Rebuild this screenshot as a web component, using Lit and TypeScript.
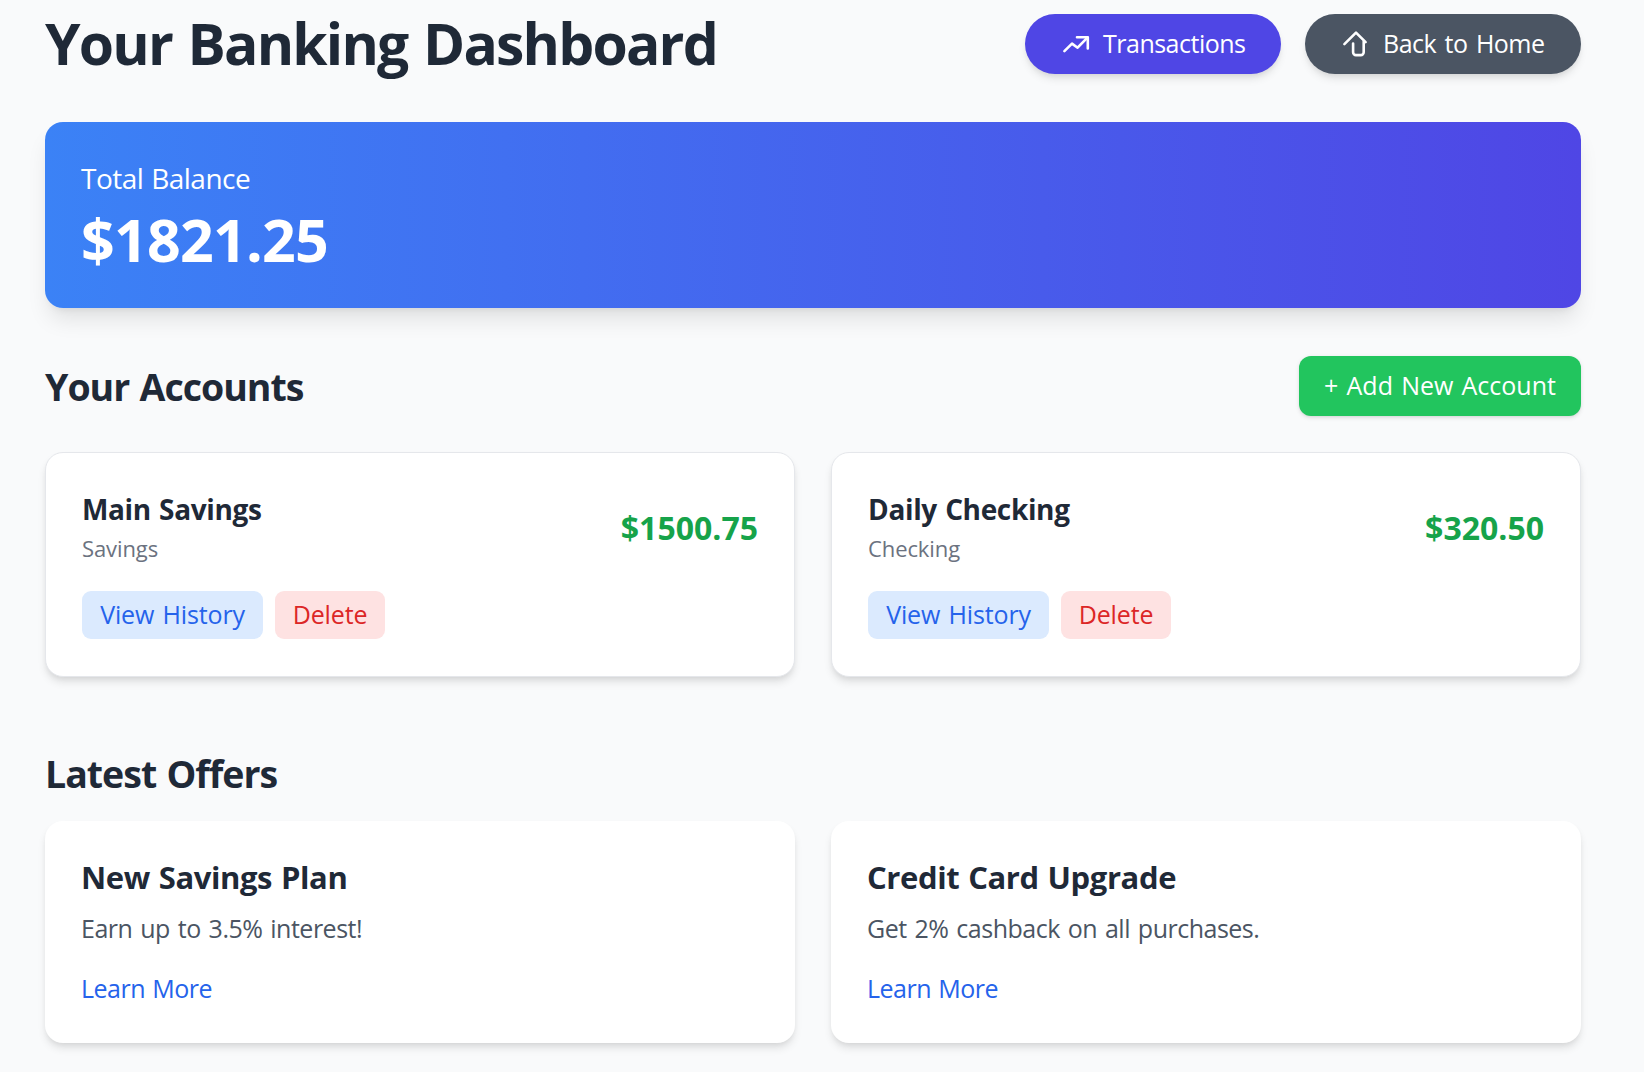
import { LitElement, html, css, svg } from "lit";
import { customElement, property } from "lit/decorators.js";

interface Account {
  name: string;
  kind: string;
  balance: string;
}

interface Offer {
  title: string;
  text: string;
}

const accounts: Account[] = [
  { name: "Main Savings", kind: "Savings", balance: "$1500.75" },
  { name: "Daily Checking", kind: "Checking", balance: "$320.50" },
];

const offers: Offer[] = [
  { title: "New Savings Plan", text: "Earn up to 3.5% interest!" },
  { title: "Credit Card Upgrade", text: "Get 2% cashback on all purchases." },
];

const trendIcon = svg`<path d="M3.4 22.2L11 14.6L16.6 18.7L26.4 8.6"/><path d="M16 8.2H26.8V19.4"/>`;
const homeIcon = svg`<path d="M3.4 15.2L15 3.6L24.6 13.2"/><path d="M12.1 14.6V23.2a2.9 2.9 0 0 0 2.9 2.9h4.8a2.9 2.9 0 0 0 2.9-2.9V12.6"/>`;

@customElement("account-card")
export class AccountCard extends LitElement {
  @property({ attribute: false }) account!: Account;

  static styles = css`
    :host {
      display: block;
      box-sizing: border-box;
      height: 225px;
      padding: 36px;
      background: #fff;
      border: 1px solid #e5e7eb;
      border-radius: 18px;
      box-shadow: 0 6px 9px -1.5px rgba(0, 0, 0, 0.1), 0 3px 6px -3px rgba(0, 0, 0, 0.1);
    }
    .top {
      display: flex;
      align-items: center;
      justify-content: space-between;
      height: 78px;
    }
    .name {
      font-size: 28px;
      line-height: 40px;
      font-weight: 700;
      letter-spacing: -0.35px;
      word-spacing: 1.3px;
      color: #1f2937;
    }
    .kind {
      font-size: 22px;
      line-height: 38px;
      letter-spacing: -0.1px;
      color: #6b7280;
    }
    .balance {
      padding-bottom: 1px;
      font-size: 32px;
      line-height: 48px;
      font-weight: 700;
      letter-spacing: 0;
      color: #16a34a;
    }
    .actions {
      display: flex;
      gap: 12px;
      margin-top: 24px;
    }
    .btn {
      height: 48px;
      padding: 0 0 1px;
      border: 0;
      border-radius: 9px;
      font: inherit;
      font-size: 25px;
      line-height: 47px;
      letter-spacing: -0.15px;
      word-spacing: 2px;
      text-align: center;
    }
    .history {
      width: 181px;
      background: #dbeafe;
      color: #2563eb;
    }
    .delete {
      width: 110px;
      background: #fee2e2;
      color: #dc2626;
    }
  `;

  render() {
    return html`
      <div class="top">
        <div>
          <div class="name">${this.account.name}</div>
          <div class="kind">${this.account.kind}</div>
        </div>
        <div class="balance">${this.account.balance}</div>
      </div>
      <div class="actions">
        <button class="btn history">View History</button>
        <button class="btn delete">Delete</button>
      </div>
    `;
  }
}

@customElement("offer-card")
export class OfferCard extends LitElement {
  @property({ attribute: false }) offer!: Offer;

  static styles = css`
    :host {
      display: block;
      box-sizing: border-box;
      height: 222px;
      padding: 33px 36px;
      background: #fff;
      border-radius: 18px;
      box-shadow: 0 6px 9px -1.5px rgba(0, 0, 0, 0.1), 0 3px 6px -3px rgba(0, 0, 0, 0.1);
    }
    .title {
      font-size: 31px;
      line-height: 46px;
      font-weight: 700;
      letter-spacing: -0.4px;
      word-spacing: 1.2px;
      color: #1f2937;
    }
    .text {
      margin-top: 10px;
      font-size: 25px;
      line-height: 36px;
      letter-spacing: -0.5px;
      word-spacing: 1.9px;
      color: #4b5563;
    }
    .link {
      display: block;
      margin-top: 24px;
      font-size: 25px;
      line-height: 36px;
      letter-spacing: -0.5px;
      word-spacing: 1.2px;
      color: #2563eb;
    }
  `;

  render() {
    return html`
      <div class="title">${this.offer.title}</div>
      <div class="text">${this.offer.text}</div>
      <a class="link">Learn More</a>
    `;
  }
}

@customElement("app-root")
export class AppRoot extends LitElement {
  static styles = css`
    :host {
      display: block;
      box-sizing: border-box;
      height: 1072px;
      padding: 14px 63px 0 45px;
      overflow: hidden;
      background: #f9fafb;
      font-family: "Open Sans", "Noto Sans", sans-serif;
      color: #1f2937;
    }
    .row {
      display: flex;
      align-items: center;
      justify-content: space-between;
      height: 60px;
    }
    .title {
      margin: 0;
      padding-bottom: 2px;
      font-size: 57px;
      line-height: 60px;
      font-weight: 700;
      letter-spacing: -1.8px;
      word-spacing: 2.5px;
      white-space: nowrap;
    }
    .nav {
      display: flex;
      gap: 24px;
    }
    .pill {
      box-sizing: border-box;
      display: flex;
      align-items: center;
      gap: 12px;
      height: 60px;
      padding: 0 0 0 36px;
      border: 0;
      border-radius: 30px;
      font: inherit;
      font-size: 25px;
      letter-spacing: -0.5px;
      word-spacing: 2.4px;
      white-space: nowrap;
      color: #fff;
      box-shadow: 0 6px 9px -1.5px rgba(0, 0, 0, 0.1), 0 3px 6px -3px rgba(0, 0, 0, 0.1);
    }
    .pill-label {
      padding-bottom: 2px;
    }
    .transactions {
      width: 256px;
      background: #4f46e5;
    }
    .home {
      width: 276px;
      background: #4b5563;
    }
    .icon {
      width: 30px;
      height: 30px;
      fill: none;
      stroke: currentColor;
      stroke-width: 2.6;
      stroke-linecap: round;
      stroke-linejoin: round;
    }
    .balance {
      box-sizing: border-box;
      height: 186px;
      margin: 48px 0;
      padding: 36px;
      border-radius: 18px;
      background: linear-gradient(to right, #3b82f6, #4f46e5);
      color: #fff;
      box-shadow: 0 15px 22.5px -4.5px rgba(0, 0, 0, 0.1), 0 6px 9px -6px rgba(0, 0, 0, 0.1);
    }
    .label {
      font-size: 28px;
      line-height: 40px;
      letter-spacing: -0.5px;
      word-spacing: 1px;
    }
    .total {
      font-size: 59px;
      line-height: 83px;
      font-weight: 700;
      letter-spacing: -0.75px;
    }
    .heading {
      margin: 0;
      padding-top: 1px;
      font-size: 37.5px;
      line-height: 54px;
      font-weight: 700;
      letter-spacing: -1px;
      word-spacing: 1.5px;
    }
    .add {
      width: 282px;
      height: 60px;
      padding: 0 0 2px;
      border: 0;
      border-radius: 12px;
      background: #22c55e;
      color: #fff;
      font: inherit;
      font-size: 25px;
      letter-spacing: 0;
      word-spacing: 1.7px;
      white-space: nowrap;
      box-shadow: 0 1.5px 4.5px rgba(0, 0, 0, 0.1), 0 1.5px 3px -1.5px rgba(0, 0, 0, 0.1);
    }
    .grid {
      display: grid;
      grid-template-columns: 1fr 1fr;
      gap: 36px;
    }
    .accounts {
      margin: 36px 0 69px;
    }
    .offers {
      margin-top: 20px;
    }
  `;

  render() {
    return html`
      <header class="row">
        <h1 class="title">Your Banking Dashboard</h1>
        <nav class="nav">
          <button class="pill transactions">
            <svg class="icon" viewBox="0 0 30 30">${trendIcon}</svg>
            <span class="pill-label">Transactions</span>
          </button>
          <button class="pill home">
            <svg class="icon" viewBox="0 0 30 30">${homeIcon}</svg>
            <span class="pill-label">Back to Home</span>
          </button>
        </nav>
      </header>
      <section class="balance">
        <div class="label">Total Balance</div>
        <div class="total">$1821.25</div>
      </section>
      <div class="row">
        <h2 class="heading">Your Accounts</h2>
        <button class="add">+ Add New Account</button>
      </div>
      <div class="grid accounts">
        ${accounts.map((a) => html`<account-card .account=${a}></account-card>`)}
      </div>
      <h2 class="heading">Latest Offers</h2>
      <div class="grid offers">
        ${offers.map((o) => html`<offer-card .offer=${o}></offer-card>`)}
      </div>
    `;
  }
}
